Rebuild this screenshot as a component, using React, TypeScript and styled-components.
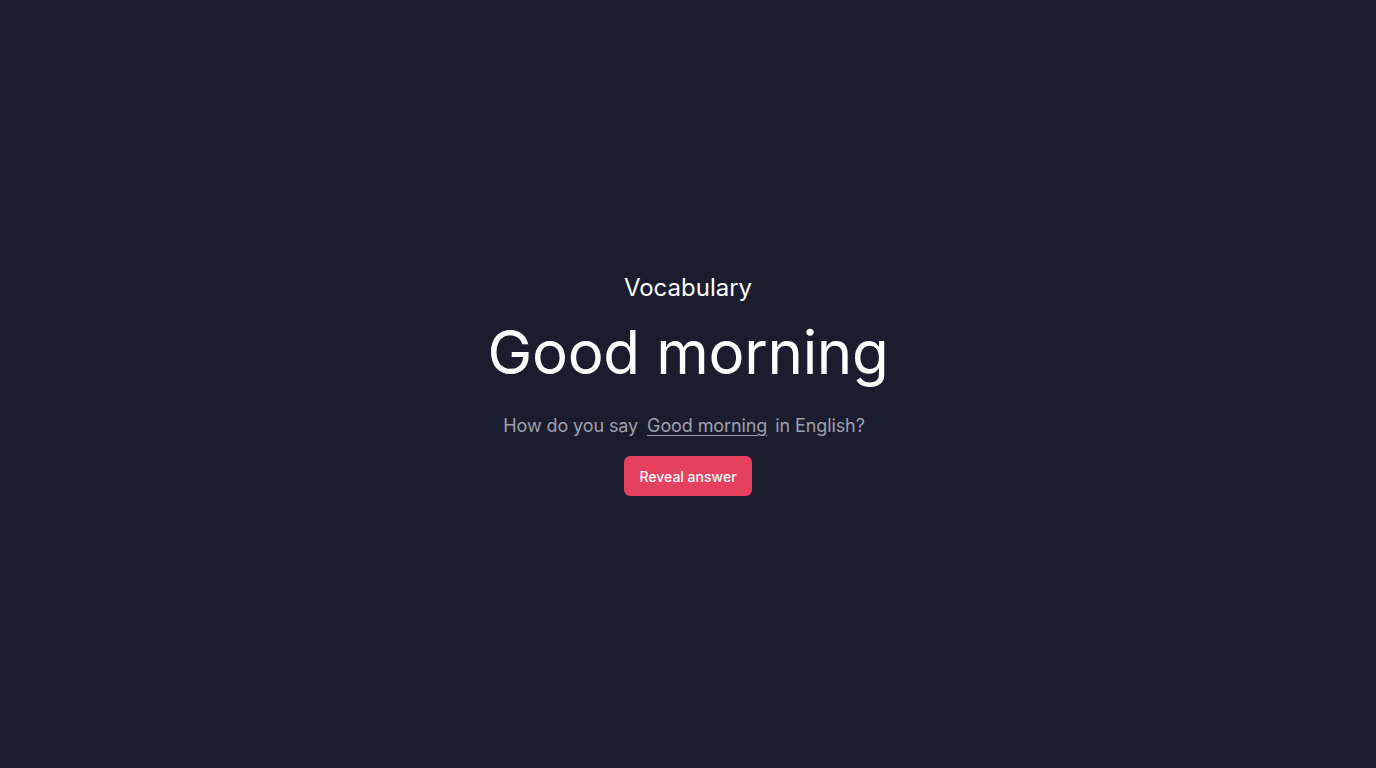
import React from "react";
import styled, { createGlobalStyle } from "styled-components";

const GlobalStyle = createGlobalStyle`
  html, body {
    margin: 0;
    padding: 0;
    background: #1b1c2e;
    font-family: Inter, "Noto Sans", sans-serif;
  }
`;

const Page = styled.main`
  display: flex;
  align-items: center;
  justify-content: center;
  width: 100%;
  height: 100vh;
  background: #1b1c2e;
`;

const Card = styled.section`
  display: flex;
  flex-direction: column;
  align-items: center;
  text-align: center;
`;

const Category = styled.div`
  font-size: 24px;
  line-height: 32px;
  color: #ffffff;
  font-weight: 400;
`;

const Word = styled.h1`
  margin: 12px 0 0;
  font-size: 60px;
  line-height: 72px;
  font-weight: 400;
  letter-spacing: -0.3px;
  color: #ffffff;
`;

const Prompt = styled.p`
  margin: 24px 0 0;
  padding-right: 8px;
  font-size: 18px;
  line-height: 28px;
  letter-spacing: -0.1px;
  color: #9fa0ad;
`;

const Highlight = styled.span`
  display: inline-block;
  margin: 0 3px 0 4px;
  text-decoration: underline;
  text-underline-offset: 3px;
`;

const RevealButton = styled.button`
  margin-top: 16px;
  height: 40px;
  padding: 0 15px;
  border: none;
  border-radius: 6px;
  background: #e5405e;
  color: #ffffff;
  font-family: Inter, "Noto Sans", sans-serif;
  font-size: 14px;
  font-weight: 500;
  cursor: pointer;
`;

export default function App() {
  return (
    <>
      <GlobalStyle />
      <Page>
        <Card>
          <Category>Vocabulary</Category>
          <Word>Good morning</Word>
          <Prompt>
            How do you say <Highlight>Good morning</Highlight> in English?
          </Prompt>
          <RevealButton>Reveal answer</RevealButton>
        </Card>
      </Page>
    </>
  );
}
